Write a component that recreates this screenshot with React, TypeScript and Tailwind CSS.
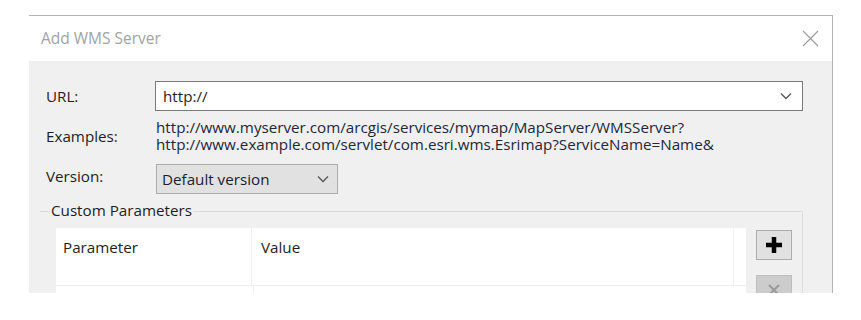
import React from "react";

const font = { fontFamily: '"Open Sans", "Noto Sans", sans-serif' };

function Chevron({ className = "" }: { className?: string }) {
  return (
    <svg width="12" height="8" viewBox="0 0 12 8" className={className}>
      <path d="M1 1.5 L6 6.5 L11 1.5" fill="none" stroke="#555" strokeWidth="1.3" />
    </svg>
  );
}

export default function App() {
  return (
    <div className="w-[861px] h-[320px] bg-white text-[15.2px] text-[#1e1e1e]" style={font}>
      <div className="ml-[29px] pt-[15px]">
        <div className="w-[804px] h-[278px] border-t border-r border-[#b4b4b4] flex flex-col overflow-hidden">
          <div className="h-[45px] bg-white flex items-center justify-between pl-[12px] pr-[13px] shrink-0">
            <span className="text-[#a3a3a3] text-[15.5px]">Add WMS Server</span>
            <svg width="17" height="17" viewBox="0 0 17 17">
              <path d="M1 1 L16 16 M16 1 L1 16" stroke="#9a9a9a" strokeWidth="1.1" />
            </svg>
          </div>
          <div className="flex-1 bg-[#f0f0f0] pl-[17px] pt-[20px] flex flex-col">
            <div className="flex items-center h-[30px]">
              <span className="w-[109px]">URL:</span>
              <div className="w-[648px] h-[30px] border border-[#7a7a7a] bg-white flex items-center justify-between pl-[7px] pr-[10px]">
                <span>http://</span>
                <Chevron />
              </div>
            </div>
            <div className="flex h-[53px] pt-[8px]">
              <span className="w-[109px] pt-[6px]">Examples:</span>
              <div className="text-[#23263a] leading-[16.5px] pl-[1px]">
                <div>http://www.myserver.com/arcgis/services/mymap/MapServer/WMSServer?</div>
                <div>http://www.example.com/servlet/com.esri.wms.Esrimap?ServiceName=Name&amp;</div>
              </div>
            </div>
            <div className="flex items-center h-[30px]">
              <span className="w-[110px] -mt-[6px]">Version:</span>
              <div className="w-[182px] h-[30px] border border-[#adadad] bg-[#e1e1e1] flex items-center justify-between pl-[5px] pr-[8px]">
                <span className="text-[#1a1d33]">Default version</span>
                <Chevron />
              </div>
            </div>
            <div className="relative mt-[17px] ml-[-6px] w-[763px] flex-1 border-t border-r border-[#dcdcdc]">
              <span className="absolute -top-[12px] left-[10px] bg-[#f0f0f0] px-[1px] leading-[20px]">Custom Parameters</span>
              <div className="flex pt-[16px] pl-[16px] gap-[10px]">
                <div className="w-[690px] h-[70px] bg-white flex flex-col">
                  <div className="flex h-[58px] border-b border-[#f0f0f0]">
                    <div className="w-[196px] border-r border-[#f0f0f0] pl-[7px] pt-[8px]">Parameter</div>
                    <div className="flex-1 pl-[9px] pt-[8px] border-r border-[#f0f0f0] mr-[12px]">Value</div>
                  </div>
                  <div className="flex flex-1">
                    <div className="w-[198px] border-r border-[#f0f0f0]" />
                  </div>
                </div>
                <div className="flex flex-col gap-[15px] pt-[2px]">
                  <div className="w-[36px] h-[30px] border border-[#adadad] bg-[#e1e1e1] flex items-center justify-center">
                    <svg width="20" height="20" viewBox="0 0 20 20">
                      <path d="M10 2 V18 M2 10 H18" stroke="#000" strokeWidth="4.5" />
                    </svg>
                  </div>
                  <div className="w-[36px] h-[30px] border border-[#bfbfbf] bg-[#cccccc] flex items-center justify-center">
                    <svg width="14" height="14" viewBox="0 0 14 14">
                      <path d="M2 2 L12 12 M12 2 L2 12" stroke="#9a9a9a" strokeWidth="2" />
                    </svg>
                  </div>
                </div>
              </div>
            </div>
          </div>
        </div>
      </div>
    </div>
  );
}
